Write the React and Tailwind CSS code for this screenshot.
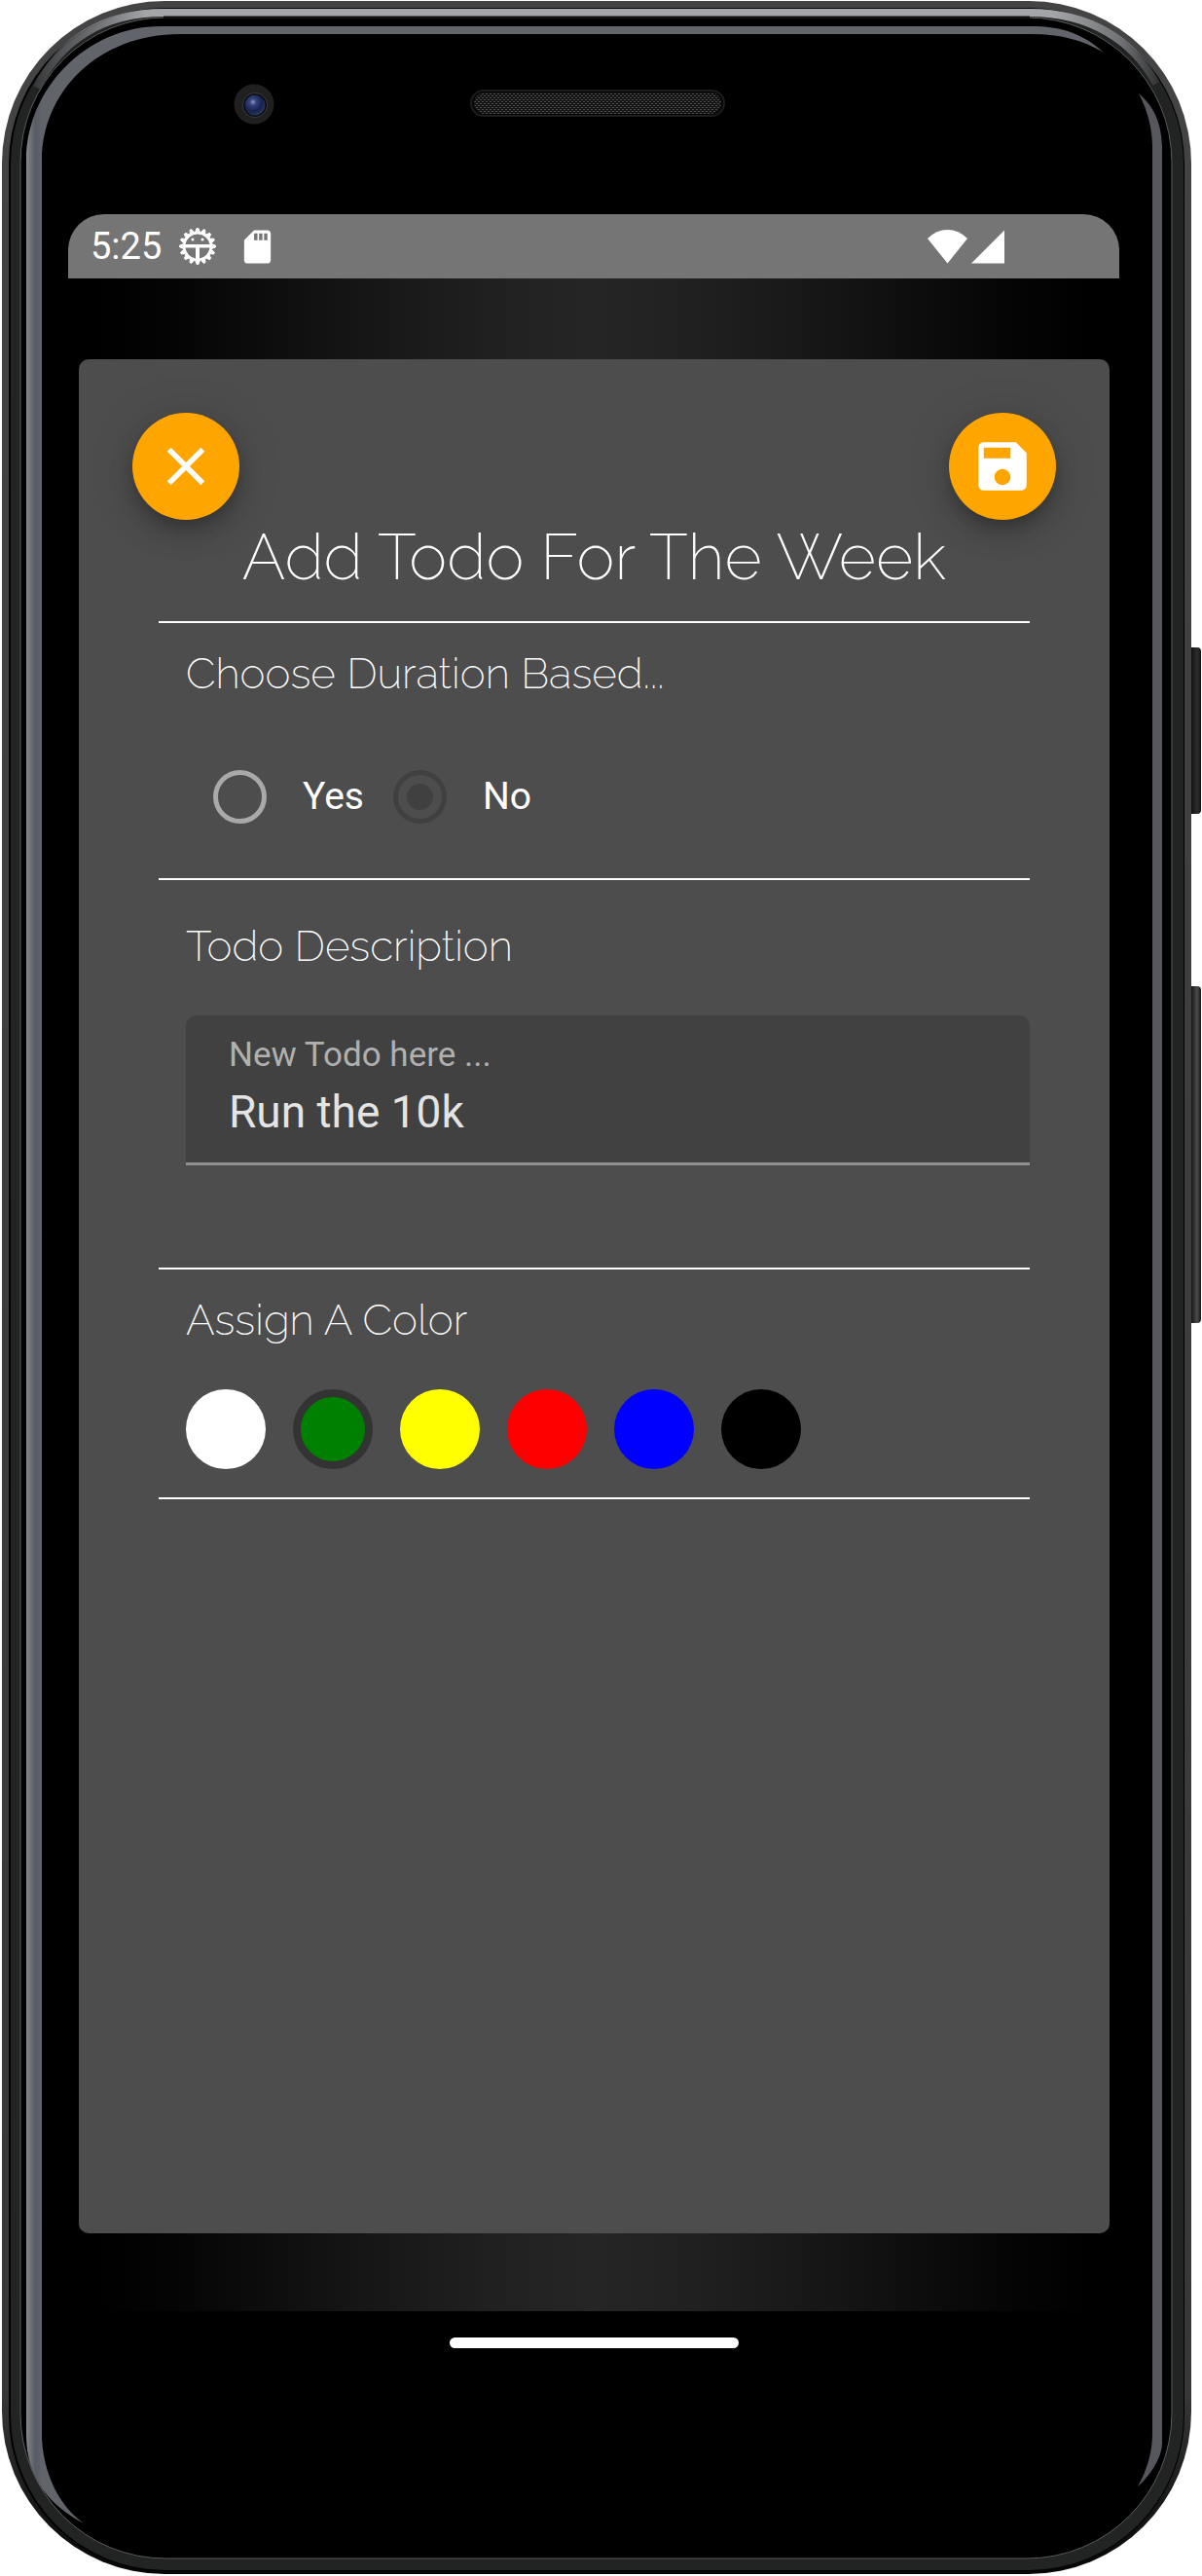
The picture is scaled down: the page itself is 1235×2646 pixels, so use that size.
import React, { useState } from "react";
import { MdClose, MdSave, MdSdCard } from "react-icons/md";

const SWATCHES = [
  { name: "White", fill: "bg-white" },
  { name: "Green", fill: "bg-[#008000]" },
  { name: "Yellow", fill: "bg-[#ffff00]" },
  { name: "Red", fill: "bg-[#ff0000]" },
  { name: "Blue", fill: "bg-[#0000ff]" },
  { name: "Black", fill: "bg-black" },
];

const GEAR_POINTS = Array.from({ length: 64 }, (_, i) => {
  const radius = i % 4 < 2 ? 18.5 : 15;
  const angle = ((i - 0.5) / 64) * Math.PI * 2 + Math.PI / 2;
  return `${(20 + radius * Math.cos(angle)).toFixed(2)},${(20 + radius * Math.sin(angle)).toFixed(2)}`;
}).join(" ");

/* Metal body, rims, side keys and glass reflections of the handset. */
function Chassis() {
  return (
    <svg
      className="absolute inset-0 h-full w-full"
      viewBox="0 0 1235 2646"
      preserveAspectRatio="none"
      aria-hidden="true"
    >
      <defs>
        <linearGradient id="rim" x1="0" y1="0" x2="0" y2="1">
          <stop offset="0" stopColor="#454444" />
          <stop offset="0.93" stopColor="#383636" />
          <stop offset="1" stopColor="#060606" />
        </linearGradient>
        <linearGradient id="silver" gradientUnits="userSpaceOnUse" x1="20" y1="0" x2="1200" y2="0">
          <stop offset="0" stopColor="#8f9196" stopOpacity="0" />
          <stop offset="0.04" stopColor="#777a80" stopOpacity="0.6" />
          <stop offset="0.11" stopColor="#a3a5a9" />
          <stop offset="0.9" stopColor="#a3a5a9" />
          <stop offset="0.96" stopColor="#6f7175" />
          <stop offset="1" stopColor="#6f7175" stopOpacity="0" />
        </linearGradient>
        <linearGradient id="glass" gradientUnits="userSpaceOnUse" x1="27" y1="0" x2="43" y2="0">
          <stop offset="0" stopColor="#85888b" />
          <stop offset="0.3" stopColor="#6c7076" />
          <stop offset="0.6" stopColor="#575b63" />
          <stop offset="1" stopColor="#62646b" />
        </linearGradient>
        <linearGradient id="key" x1="0" y1="0" x2="1" y2="0">
          <stop offset="0.3" stopColor="#0c0c0c" />
          <stop offset="0.75" stopColor="#4c4c4c" />
          <stop offset="1" stopColor="#151515" />
        </linearGradient>
        <linearGradient id="powerKey" x1="0" y1="0" x2="1" y2="0">
          <stop offset="0.3" stopColor="#0c0c0c" />
          <stop offset="0.75" stopColor="#2e2e2e" />
          <stop offset="1" stopColor="#111" />
        </linearGradient>
      </defs>
      <rect x="1218" y="665" width="16" height="171" rx="4" fill="url(#powerKey)" />
      <rect x="1218" y="1013" width="16" height="346" rx="4" fill="url(#key)" />
      <rect x="2" y="1" width="1222" height="2643" rx="167" fill="url(#rim)" />
      <rect x="9" y="8" width="1208" height="2633" rx="160" fill="#000" />
      <rect x="11" y="9" width="1205" height="2631" rx="159" fill="#222323" />
      <path
        d="M38 90 C62 42 105 13 168 13 H1058 C1120 13 1165 42 1188 86"
        fill="none"
        stroke="url(#silver)"
        strokeWidth="8"
      />
      <rect x="21" y="18" width="1183" height="2610" rx="149" fill="#000" stroke="#5a5a5a" strokeWidth="1" />
      <path d="M168 18 H1058" stroke="#111" strokeWidth="3" />
      <path
        d="M1134 54 C1112 34 1090 27 1060 27 H165 C90 27 27 90 27 165 V2500 C27 2550 55 2575 86 2592 C55 2570 43 2530 43 2500 V165 C43 95 100 35 185 35 H1060 C1090 35 1112 41 1134 54Z"
        fill="url(#glass)"
      />
      <path
        d="M1170 96 C1182 107 1193 120 1194 150 V2510 C1194 2525 1180 2545 1169 2554 C1180 2535 1184 2515 1184 2500 V150 C1184 135 1180 115 1170 96Z"
        fill="#55565e"
      />
    </svg>
  );
}

function Camera() {
  return (
    <svg className="size-[42px]" viewBox="0 0 42 42" aria-hidden="true">
      <defs>
        <radialGradient id="lens" cx="0.4" cy="0.35" r="0.65">
          <stop offset="0" stopColor="#8b97c4" />
          <stop offset="0.25" stopColor="#35437a" />
          <stop offset="0.7" stopColor="#17214f" />
          <stop offset="1" stopColor="#2a3a58" />
        </radialGradient>
      </defs>
      <circle cx="21" cy="21" r="20.5" fill="#202020" />
      <circle cx="22" cy="22" r="12.5" fill="#0a0a0e" stroke="#3c3c3f" strokeWidth="1" />
      <circle cx="22" cy="22" r="10.5" fill="url(#lens)" />
    </svg>
  );
}

function Speaker() {
  return (
    <svg className="h-7 w-[262px]" viewBox="0 0 262 28" aria-hidden="true">
      <defs>
        <pattern id="mesh" width="4" height="4" patternUnits="userSpaceOnUse">
          <rect width="4" height="4" fill="#141514" />
          <rect width="2" height="1" fill="#4a4d4b" />
          <rect x="2" y="2" width="2" height="1" fill="#4a4d4b" />
        </pattern>
      </defs>
      <rect x="1" y="1" width="260" height="26" rx="13" fill="#050505" stroke="#1c1c1f" strokeWidth="2" />
      <rect x="4" y="3" width="254" height="22" rx="11" fill="url(#mesh)" />
    </svg>
  );
}

function SystemIcon() {
  return (
    <svg className="size-10" viewBox="0 0 40 40" aria-hidden="true">
      <polygon points={GEAR_POINTS} fill="#fff" stroke="#fff" strokeWidth="1" strokeLinejoin="round" />
      <path d="M7.5 18 A12.7 12.7 0 0 1 32.5 18Z" fill="#757575" />
      <path d="M7.5 21.500 H18 V32.5 A12.7 12.7 0 0 1 7.5 21.500Z" fill="#757575" />
      <path d="M32.5 21.500 H22 V32.5 A12.7 12.7 0 0 0 32.5 21.500Z" fill="#757575" />
      <circle cx="15" cy="13" r="1.5" fill="#fff" />
      <circle cx="25" cy="13" r="1.5" fill="#fff" />
    </svg>
  );
}

function StatusBar() {
  return (
    <div className="flex h-[66px] items-center rounded-t-[37px] bg-[#757575] pr-[118px] pl-[23px] text-white">
      <time className="text-[38px] leading-[66px]">5:25</time>
      <span className="ml-[17px]">
        <SystemIcon />
      </span>
      <MdSdCard className="ml-[21px] size-[41px]" />
      <span className="grow" />
      <svg className="h-[35px] w-[79px]" viewBox="0 0 79 35" aria-hidden="true">
        <path d="M0 9 Q9 0 20.500 0 Q32 0 41 9 L20.500 34.500Z" fill="#fff" />
        <path d="M45 34.500 L79 0.500 V34.500Z" fill="#fff" />
      </svg>
    </div>
  );
}

function FloatingButton({ label, children, ...rest }) {
  return (
    <button
      aria-label={label}
      className="flex size-[110px] items-center justify-center rounded-full bg-[#ffa500] text-white shadow-[0_8px_14px_-3px_rgba(0,0,0,0.2),0_16px_28px_rgba(0,0,0,0.14),0_3px_50px_rgba(0,0,0,0.12)]"
      {...rest}
    >
      {children}
    </button>
  );
}

const HEADING = "font-['Raleway','Lato',sans-serif] text-[44px] leading-[60px] font-extralight";

export default function App() {
  const [timed, setTimed] = useState("no");
  const [todo, setTodo] = useState("Run the 10k");
  const [color, setColor] = useState("Green");

  return (
    <div className="relative w-full bg-white font-['Roboto',sans-serif]">
      <Chassis />
      <div className="relative pr-[85px] pb-[226px] pl-[70px]">
        <div className="flex h-[220px] items-start pt-[86px] pl-[170px]">
          <Camera />
          <div className="pt-[6px] pl-[201px]">
            <Speaker />
          </div>
        </div>

        <StatusBar />

        <main className="bg-[linear-gradient(90deg,#000_3%,#060606_12%,#151515_27%,#202020_40%,#252525_50%,#202020_60%,#151515_73%,#060606_88%,#000_97%)] pt-[83px] pr-[10px] pb-20 pl-[11px]">
          <form
            className="min-h-[1925px] rounded-[10px] bg-[#4d4d4d] pt-[55px] text-white"
            onSubmit={(e) => e.preventDefault()}
          >
            <div className="flex justify-between px-[55px]">
              <FloatingButton label="Close" type="button">
                <MdClose className="size-[66px]" />
              </FloatingButton>
              <FloatingButton label="Save" type="submit">
                <MdSave className="size-[66px]" />
              </FloatingButton>
            </div>

            <div className="px-[82px]">
              <h1 className="h-[104px] text-center font-['Raleway','Lato',sans-serif] text-[66px] leading-[76px] font-extralight whitespace-nowrap">
                Add Todo For The Week
              </h1>

              <fieldset className="h-[264px] border-t-2 border-white pt-[22px] pl-7">
                <h2 className={HEADING}>Choose Duration Based...</h2>
                <div className="flex items-center pt-[69px] pl-7">
                  <input
                    id="timed-yes"
                    type="radio"
                    name="timed"
                    checked={timed === "yes"}
                    onChange={() => setTimed("yes")}
                    className="size-[55px] appearance-none rounded-full border-[5px] border-[#a9a9a9] bg-clip-content p-[9px] checked:border-[#404040] checked:bg-[#404040]"
                  />
                  <label htmlFor="timed-yes" className="pr-[30px] pl-[37px] text-[39px] leading-[55px]">
                    Yes
                  </label>
                  <input
                    id="timed-no"
                    type="radio"
                    name="timed"
                    checked={timed === "no"}
                    onChange={() => setTimed("no")}
                    className="size-[55px] appearance-none rounded-full border-[5px] border-[#a9a9a9] bg-clip-content p-[9px] checked:border-[#404040] checked:bg-[#404040]"
                  />
                  <label htmlFor="timed-no" className="pl-[37px] text-[39px] leading-[55px]">
                    No
                  </label>
                </div>
              </fieldset>

              <section className="h-[400px] border-t-2 border-white pt-[38px] pl-7">
                <h2 className={HEADING}>Todo Description</h2>
                <div className="mt-[41px] h-[154px] rounded-t-[11px] border-b-[3px] border-[#8f8f8f] bg-[#414141] px-[44px] pt-[18px]">
                  <label htmlFor="todo" className="block text-[35px] leading-[46px] text-[#b0b0b0]">
                    New Todo here ...
                  </label>
                  <input
                    id="todo"
                    type="text"
                    value={todo}
                    onChange={(e) => setTodo(e.target.value)}
                    className="block w-full bg-transparent text-[46px] leading-[70px] text-[#e4e4e4] outline-none"
                  />
                </div>
              </section>

              <fieldset className="h-[238px] border-y-2 border-white pt-[22px] pl-7">
                <h2 className={HEADING}>Assign A Color</h2>
                <div className="flex gap-7 pt-[41px]">
                  {SWATCHES.map((s) => (
                    <input
                      key={s.name}
                      type="radio"
                      name="color"
                      aria-label={s.name}
                      checked={color === s.name}
                      onChange={() => setColor(s.name)}
                      className={`size-[82px] appearance-none rounded-full border-[#333] checked:border-[8px] ${s.fill}`}
                    />
                  ))}
                </div>
              </fieldset>
            </div>
          </form>
        </main>

        <div className="flex h-[46px] justify-center pt-[27px]">
          <div className="h-[11px] w-[297px] rounded-full bg-white" />
        </div>
      </div>
    </div>
  );
}
